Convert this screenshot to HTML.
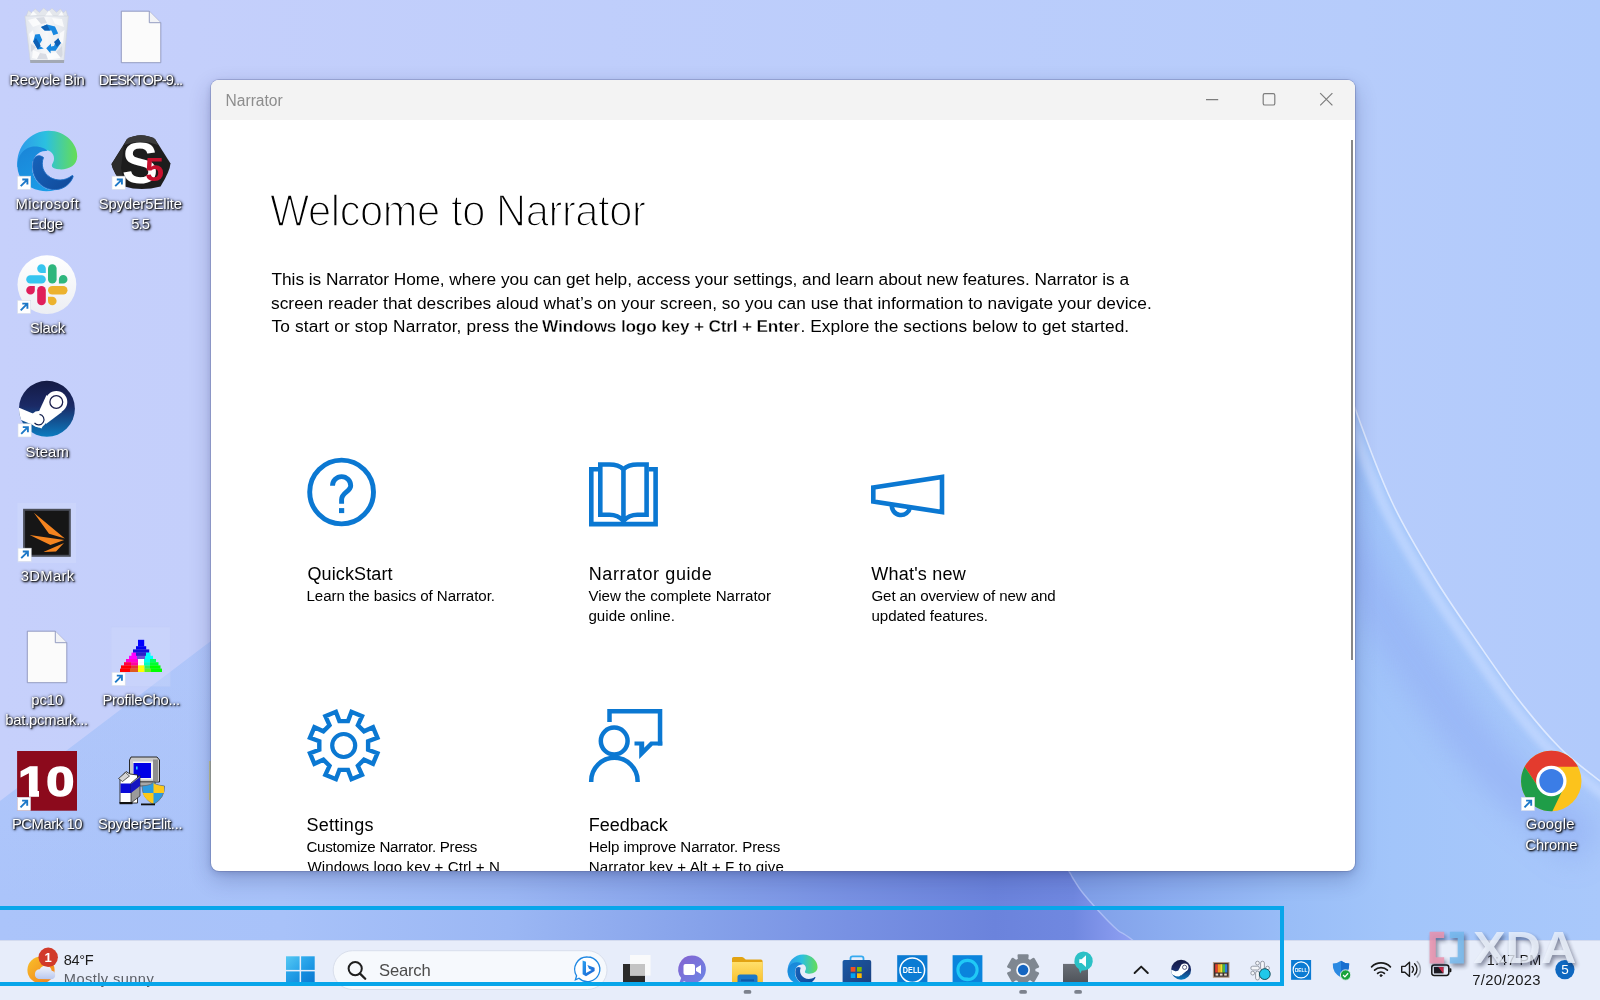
<!DOCTYPE html>
<html lang="en">
<head>
<meta charset="utf-8">
<title>Narrator</title>
<style>
*{box-sizing:border-box;margin:0;padding:0}
html,body{width:1600px;height:1000px;overflow:hidden;background:#c5d0fb;font-family:"Liberation Sans","DejaVu Sans",sans-serif;color:#000}
#desk{position:absolute;left:0;top:0;width:1600px;height:1000px;overflow:hidden;will-change:transform}
#wall{position:absolute;left:0;top:0}
.abs{position:absolute}
/* desktop icons */
.dlabel{position:absolute;width:110px;text-align:center;color:#fff;font-size:14.8px;line-height:20px;white-space:nowrap;
 text-shadow:1px 1px 1.5px rgba(0,0,0,.95),1px 1px 3px rgba(0,0,0,.75),0 0 3px rgba(0,0,0,.55)}
/* window */
#win{position:absolute;left:211px;top:80px;width:1144px;height:791px;background:#fff;border-radius:8px;overflow:hidden;
 box-shadow:0 0 0 1px rgba(90,100,150,.32),0 8px 22px rgba(20,30,90,.24),0 2px 6px rgba(20,30,90,.16)}
#tbar{position:absolute;left:0;top:0;width:100%;height:40px;background:#f3f3f3}
#tbar .t{position:absolute;left:15px;top:11.5px;font-size:15.6px;line-height:18px;color:#8d8d8d}
.h1{position:absolute;left:58px;top:104px;font-size:45px;line-height:54px;-webkit-text-stroke:1.7px #fff;white-space:nowrap;color:#000;transform:scaleX(.925);transform-origin:0 0}
.p{position:absolute;left:60px;font-size:17.3px;line-height:22px;white-space:nowrap;color:#000}
.ct{position:absolute;font-size:18px;line-height:24px;white-space:nowrap;color:#000}
.cd{position:absolute;font-size:15.1px;line-height:20px;white-space:nowrap;color:#000}
/* taskbar */
#task{position:absolute;left:0;top:940px;width:1600px;height:60px;background:#e7edfa;border-top:1px solid #d3dbef}
#focus{position:absolute;left:-6px;top:906px;width:1290px;height:80px;border:4px solid #08a6ea}
.tt{position:absolute;white-space:nowrap}
#p3b b{-webkit-text-stroke:.35px #fff}
/*FIT*/
#h1{letter-spacing:-0.444px;margin-left:1.20px}
#p1{letter-spacing:-0.036px;margin-left:0.50px}
#p2{letter-spacing:0.044px;margin-left:0.00px}
#p3a{letter-spacing:0.143px;margin-left:0.50px}
#p3b{letter-spacing:-0.200px;margin-left:0.00px}
#p3c{letter-spacing:0.070px;margin-left:1.50px}
#t1{letter-spacing:0.111px;margin-left:0.50px}
#d1a{letter-spacing:-0.071px;margin-left:-0.50px}
#t2{letter-spacing:0.615px;margin-left:-0.31px}
#d2a{letter-spacing:0.000px;margin-left:-0.61px}
#d2b{letter-spacing:0.083px;margin-left:-0.61px}
#t3{letter-spacing:0.222px;margin-left:0.31px}
#d3a{letter-spacing:-0.120px;margin-left:0.50px}
#d3b{letter-spacing:-0.062px;margin-left:0.50px}
#t4{letter-spacing:0.286px;margin-left:-0.61px}
#d4a{letter-spacing:-0.250px;margin-left:-0.61px}
#d4b{letter-spacing:0.077px;margin-left:0.41px}
#t5{letter-spacing:0.000px;margin-left:-0.31px}
#d5a{letter-spacing:-0.111px;margin-left:-0.31px}
#d5b{letter-spacing:0.103px;margin-left:-0.31px}
#tt0{letter-spacing:-0.000px;margin-left:-0.50px}
#l1{letter-spacing:-0.274px;margin-left:-0.14px}
#l2{letter-spacing:-1.040px;margin-left:-0.58px}
#l3a{letter-spacing:0.403px;margin-left:0.39px}
#l3b{letter-spacing:-0.308px;margin-left:-1.05px}
#l4a{letter-spacing:-0.059px;margin-left:-0.70px}
#l4b{letter-spacing:-0.841px;margin-left:-0.77px}
#l5{letter-spacing:-0.247px;margin-left:0.39px}
#l6{letter-spacing:0.119px;margin-left:0.23px}
#l7{letter-spacing:0.318px;margin-left:0.67px}
#l8a{letter-spacing:-0.031px;margin-left:0.19px}
#l8b{letter-spacing:-0.220px;margin-left:-0.36px}
#l9{letter-spacing:-0.311px;margin-left:0.11px}
#l10{letter-spacing:-0.426px;margin-left:-0.03px}
#l11{letter-spacing:-0.254px;margin-left:-0.80px}
#l12a{letter-spacing:0.217px;margin-left:-0.80px}
#l12b{letter-spacing:-0.087px;margin-left:0.37px}
#w1{letter-spacing:-0.365px;margin-left:-0.20px}
#w2{letter-spacing:0.430px;margin-left:-0.20px}
#se{letter-spacing:-0.188px;margin-left:-0.66px}
#tm{letter-spacing:0.118px;margin-left:-0.70px}
#dt{letter-spacing:0.309px;margin-left:-0.81px}
/*ENDFIT*/
</style>
</head>
<body>
<div id="desk">
<svg id="wall" width="1600" height="1000" viewBox="0 0 1600 1000">
<defs>
<linearGradient id="gbase" x1="0" y1="0" x2="1" y2="0"><stop offset="0" stop-color="#c6d0fb"/><stop offset=".12" stop-color="#c4cffb"/><stop offset=".85" stop-color="#b6ccfb"/><stop offset="1" stop-color="#b1cafb"/></linearGradient>
<linearGradient id="gright" gradientUnits="userSpaceOnUse" x1="1080" y1="0" x2="1600" y2="0"><stop offset="0" stop-color="#809fe8"/><stop offset=".15" stop-color="#8aabef"/><stop offset=".4" stop-color="#99bdf7"/><stop offset=".6" stop-color="#a2c5fa"/><stop offset="1" stop-color="#a9c8fb"/></linearGradient>
<linearGradient id="gleft" gradientUnits="userSpaceOnUse" x1="0" y1="0" x2="1130" y2="0"><stop offset="0" stop-color="#abc4fa"/><stop offset=".25" stop-color="#a8c2f9"/><stop offset=".45" stop-color="#9bb7f4"/><stop offset=".62" stop-color="#86a2ea"/><stop offset=".75" stop-color="#7891e3"/><stop offset=".88" stop-color="#6b83dc"/><stop offset=".95" stop-color="#7088e0"/><stop offset="1" stop-color="#8e9ff2"/></linearGradient>
<linearGradient id="gleftv" x1="0" y1="0" x2="0" y2="1"><stop offset="0" stop-color="#c3cffb" stop-opacity=".55"/><stop offset="1" stop-color="#c3cffb" stop-opacity="0"/></linearGradient>
<filter id="bl12" x="-30%" y="-30%" width="160%" height="160%"><feGaussianBlur stdDeviation="14"/></filter>
<filter id="bl3" x="-30%" y="-30%" width="160%" height="160%"><feGaussianBlur stdDeviation="3"/></filter>
<clipPath id="cright"><path d="M1330.0,330.0 C1334.3,343.5 1345.7,382.3 1356.0,411.0 C1366.3,439.7 1379.0,474.3 1392.0,502.0 C1405.0,529.7 1420.0,554.0 1434.0,577.0 C1448.0,600.0 1462.0,619.7 1476.0,640.0 C1490.0,660.3 1504.0,681.0 1518.0,699.0 C1532.0,717.0 1546.3,734.3 1560.0,748.0 C1573.7,761.7 1586.7,770.3 1600.0,781.0 C1613.3,791.7 1633.3,806.8 1640.0,812.0 L1640,1010 L1000,1010 L1000,330 Z"/></clipPath>
<clipPath id="cleft"><path d="M1050.0,845.0 C1053.1,849.3 1065.0,865.6 1068.7,871.0 C1072.5,876.4 1070.2,873.9 1072.5,877.5 C1074.8,881.1 1077.9,886.7 1082.5,892.5 C1087.1,898.3 1094.2,906.2 1100.0,912.5 C1105.8,918.8 1112.1,925.4 1117.5,930.0 C1122.9,934.6 1118.8,930.0 1132.5,940.0 C1146.2,950.0 1185.4,979.2 1200.0,990.0 C1214.6,1000.8 1216.7,1002.5 1220.0,1005.0 L0,1010 L0,400 L1050,400 Z"/></clipPath>
</defs>
<rect width="1600" height="1000" fill="url(#gbase)"/>
<g clip-path="url(#cright)">
<rect x="1000" y="300" width="600" height="700" fill="url(#gright)"/>
<path d="M1330.0,330.0 C1334.3,343.5 1345.7,382.3 1356.0,411.0 C1366.3,439.7 1379.0,474.3 1392.0,502.0 C1405.0,529.7 1420.0,554.0 1434.0,577.0 C1448.0,600.0 1462.0,619.7 1476.0,640.0 C1490.0,660.3 1504.0,681.0 1518.0,699.0 C1532.0,717.0 1546.3,734.3 1560.0,748.0 C1573.7,761.7 1586.7,770.3 1600.0,781.0 C1613.3,791.7 1633.3,806.8 1640.0,812.0" transform="translate(-52,34)" fill="none" stroke="#96b3f5" stroke-width="46" opacity=".75" filter="url(#bl12)"/>
<path d="M1330.0,330.0 C1334.3,343.5 1345.7,382.3 1356.0,411.0 C1366.3,439.7 1379.0,474.3 1392.0,502.0 C1405.0,529.7 1420.0,554.0 1434.0,577.0 C1448.0,600.0 1462.0,619.7 1476.0,640.0 C1490.0,660.3 1504.0,681.0 1518.0,699.0 C1532.0,717.0 1546.3,734.3 1560.0,748.0 C1573.7,761.7 1586.7,770.3 1600.0,781.0 C1613.3,791.7 1633.3,806.8 1640.0,812.0" transform="translate(-7,5)" fill="none" stroke="#c4d9ff" stroke-width="10" opacity=".8" filter="url(#bl3)"/>
</g>
<path d="M1330.0,330.0 C1334.3,343.5 1345.7,382.3 1356.0,411.0 C1366.3,439.7 1379.0,474.3 1392.0,502.0 C1405.0,529.7 1420.0,554.0 1434.0,577.0 C1448.0,600.0 1462.0,619.7 1476.0,640.0 C1490.0,660.3 1504.0,681.0 1518.0,699.0 C1532.0,717.0 1546.3,734.3 1560.0,748.0 C1573.7,761.7 1586.7,770.3 1600.0,781.0 C1613.3,791.7 1633.3,806.8 1640.0,812.0" fill="none" stroke="#e6efff" stroke-width="1.6" opacity=".85"/>
<g clip-path="url(#cleft)">
<path d="M0,801 L211,641 L420,480 L1300,480 L1300,1000 L0,1000 Z" fill="url(#gleft)"/>
<path d="M0,801 L211,641 L211,900 L0,900 Z" fill="url(#gleftv)" opacity=".5"/>
</g>
<path d="M1050.0,845.0 C1053.1,849.3 1065.0,865.6 1068.7,871.0 C1072.5,876.4 1070.2,873.9 1072.5,877.5 C1074.8,881.1 1077.9,886.7 1082.5,892.5 C1087.1,898.3 1094.2,906.2 1100.0,912.5 C1105.8,918.8 1112.1,925.4 1117.5,930.0 C1122.9,934.6 1118.8,930.0 1132.5,940.0 C1146.2,950.0 1185.4,979.2 1200.0,990.0 C1214.6,1000.8 1216.7,1002.5 1220.0,1005.0" fill="none" stroke="#b4c4f8" stroke-width="1.4" opacity=".8"/>
</svg>
<!--WALL-->








<!--ICONS_START--><svg class="abs" style="left:0;top:0" width="1600" height="1000" viewBox="0 0 1600 1000"><defs>
<linearGradient id="gbin" x1="0" y1="0" x2="1" y2="0"><stop offset="0" stop-color="#e3e7ee"/><stop offset=".5" stop-color="#f6f7f9"/><stop offset="1" stop-color="#dfe3ea"/></linearGradient>
<linearGradient id="gedge1" gradientUnits="userSpaceOnUse" x1="20" y1="150" x2="77" y2="150"><stop offset="0" stop-color="#2d9cea"/><stop offset=".45" stop-color="#2bc0e0"/><stop offset="1" stop-color="#66dd55"/></linearGradient>
<linearGradient id="gedge2" gradientUnits="userSpaceOnUse" x1="20" y1="150" x2="45" y2="192"><stop offset="0" stop-color="#1a86d8"/><stop offset="1" stop-color="#1b9de8"/></linearGradient>
<linearGradient id="gedge3" gradientUnits="userSpaceOnUse" x1="35" y1="158" x2="70" y2="188"><stop offset="0" stop-color="#1661b8"/><stop offset="1" stop-color="#114a9a"/></linearGradient>
<linearGradient id="gslack" x1="0" y1="0" x2="0" y2="1"><stop offset="0" stop-color="#ffffff"/><stop offset="1" stop-color="#eceef3"/></linearGradient>
<linearGradient id="gsteam" x1="0" y1="0" x2="0" y2="1"><stop offset="0" stop-color="#141a44"/><stop offset=".45" stop-color="#1b2a66"/><stop offset="1" stop-color="#0b7cc0"/></linearGradient>
</defs><g>
<path d="M26,16.5 L28.5,10.5 L32,13 L35,8.8 L39.5,12.5 L43.5,8 L48,11.5 L52,8.3 L56.5,12.3 L60.5,9 L63.5,12.8 L66,10.2 L67.8,16.5 Z" fill="#e4e7ec" stroke="#c9cdd6" stroke-width=".5"/>
<path d="M30,16 L33,11 L37,15 Z M45,16 L49,10.5 L53,16 Z M58,16 L61.5,11.5 L64,16 Z" fill="#fafbfc"/>
<path d="M24.9,16 H68.4 L64,60.5 H30.2 Z" fill="url(#gbin)" stroke="#cfd4de" stroke-width=".7"/>
<path d="M28,20 L36,18 L41,24 L33,27 Z M52,18 L62,19 L64,27 L55,24 Z M29,34 L33,30 L35,40 L31,44 Z M60,33 L64.5,30 L63,44 L59,41 Z M33,50 L40,53 L37,59 L32,58 Z M46,54 L56,52 L61,58 L48,59.5 Z" fill="#ffffff" opacity=".75"/>
<path d="M36,18 L44,17 L47,23 L41,24 Z M31,44 L36,47 L33,50 L31,52 Z M56,52 L62,46 L62.5,55 L61,58 Z M40,53 L46,54 L48,59.5 L37,59 Z" fill="#cdd2db" opacity=".7"/>
<path d="M30,60 H64.2 L64,62.9 H30.3 Z" fill="#a3a9b4"/>
<g fill="#1787e0">
<path d="M41,27 L47,24.6 L55,26.6 L58.2,33.4 L53.4,35.2 L51.4,30.6 L44.6,30.6 Z"/>
<path d="M35.2,34.6 L39.6,34 L42.2,40 L38.8,45.4 L43.8,48.6 L37.8,49.4 L33.2,41.6 Z"/>
<path d="M58.2,38.2 L60.8,43 L55.6,50.8 L50.6,50.8 L50.6,53.4 L46.2,48.2 L51,43.6 L51,46.4 L54,46 L56,41 Z"/>
</g>
<path d="M41,27 L47,24.6 L50,30.6 L44.6,30.6 Z M37.8,49.4 L33.2,41.6 L36,38 L40.6,45.6 Z M58.2,38.2 L60.8,43 L57,47 L54,42 Z" fill="#0d5fb4"/>
</g>
<path d="M121.3,11.2 H149.3 L160.8,22.7 V62.7 H121.3 Z" fill="#fbfbfb" stroke="#8a93bb" stroke-width=".9"/>
<path d="M149.3,11.2 V22.7 H160.8" fill="#f2f3f6" stroke="#8a93bb" stroke-width=".9"/>
<path d="M27.3,631.2 H55.3 L66.8,642.7 V682.7 H27.3 Z" fill="#fbfbfb" stroke="#8a93bb" stroke-width=".9"/>
<path d="M55.3,631.2 V642.7 H66.8" fill="#f2f3f6" stroke="#8a93bb" stroke-width=".9"/>
<g>
<path d="M17.4,167 C15.5,146 31,130.8 48.5,130.8 C66,130.8 77.6,144.5 77.2,156.5 C76.9,166 68,170 59,169.3 C52.5,168.8 50.5,166.5 52.8,163 C56,158 53,150.5 45.5,150 C36,149.4 28,157 27.5,168 Z" fill="url(#gedge1)"/>
<path d="M17.4,167 C17,153 27,145.5 37,146.5 C42.5,147 46,149 47.5,151 C38,150 31.5,158 32,168 C32.6,180 43,190.5 55,190.2 C50,191.5 44,191.6 40,190.6 C26,187.5 18,178 17.4,167 Z" fill="url(#gedge2)"/>
<path d="M33.5,160 C29.5,176 41,190.5 56,189.6 C64.5,189 70.5,183.5 73,177 C73.4,175.6 72.6,175.2 71.5,176 C65,181 56.5,181 50.5,177.5 C43,173 40.5,165 43.5,157.5 C39.5,154.5 35,155.5 33.5,160 Z" fill="url(#gedge3)" stroke="#1a6cc4" stroke-width=".9"/>
</g>
<g transform="translate(17.5,176.2)"><rect x="0" y="0" width="13.2" height="13.2" fill="#fff" stroke="#d8dde8" stroke-width=".6"/>
<path d="M3.2,10 L9.6,3.6 M4.8,3.3 H9.9 V8.4" fill="none" stroke="#1c78c8" stroke-width="1.9"/></g>
<g>
<path d="M127,139 Q141,131.5 155,139 L170.5,163.5 Q170,171 160.5,186.5 Q141,191.5 124.5,186.5 Q112.5,172 111.5,164 Z" fill="#1d1d1d"/>
<path d="M127,139 Q141,131.5 155,139 L158,145 Q141,138.5 124,145 Z" fill="#3a3a3a"/>
<path d="M111.5,164 L124,145 L121,168 L124.5,186.5 Q113,172 111.5,164 Z" fill="#2b2b2b"/>
<text x="122" y="183" font-family="'Liberation Sans',sans-serif" font-weight="bold" font-size="57" fill="#fff" textLength="36" lengthAdjust="spacingAndGlyphs">S</text>
<text x="145" y="181" font-family="'Liberation Sans',sans-serif" font-weight="bold" font-size="33" fill="#c8102e" textLength="19" lengthAdjust="spacingAndGlyphs">5</text>
</g>
<g transform="translate(112,176.2)"><rect x="0" y="0" width="13.2" height="13.2" fill="#fff" stroke="#d8dde8" stroke-width=".6"/>
<path d="M3.2,10 L9.6,3.6 M4.8,3.3 H9.9 V8.4" fill="none" stroke="#1c78c8" stroke-width="1.9"/></g>
<g><circle cx="46.9" cy="284.6" r="29.4" fill="url(#gslack)"/><rect x="26.2" y="275.2" width="19.6" height="8.4" rx="4.2" fill="#36c5f0"/><path d="M41.5,264.3 H41.5 A4.299999999999997,4.299999999999997 0 0 1 45.8,268.6 V272.9 A0,0 0 0 1 45.8,272.9 H41.5 A4.299999999999997,4.299999999999997 0 0 1 37.2,268.59999999999997 V268.6 A4.299999999999997,4.299999999999997 0 0 1 41.5,264.3 Z" fill="#36c5f0"/><rect x="48" y="264.3" width="8.6" height="19.3" rx="4.3" fill="#2eb67d"/><path d="M63.2,275.1 H63.2 A4.300000000000001,4.300000000000001 0 0 1 67.5,279.40000000000003 V279.3 A4.300000000000001,4.300000000000001 0 0 1 63.2,283.6 H58.9 A0,0 0 0 1 58.9,283.6 V279.40000000000003 A4.300000000000001,4.300000000000001 0 0 1 63.2,275.1 Z" fill="#2eb67d"/><rect x="37.2" y="286" width="8.6" height="19.3" rx="4.3" fill="#e01e5a"/><path d="M30.5,286 H34.8 A0,0 0 0 1 34.8,286 V290.3 A4.299999999999999,4.299999999999999 0 0 1 30.5,294.6 H30.5 A4.299999999999999,4.299999999999999 0 0 1 26.2,290.3 V290.3 A4.299999999999999,4.299999999999999 0 0 1 30.5,286 Z" fill="#e01e5a"/><rect x="48" y="286" width="19.5" height="8.5" rx="4.2" fill="#ecb22e"/><path d="M48,296.8 H52.3 A4.300000000000001,4.300000000000001 0 0 1 56.6,301.1 V301.0 A4.300000000000001,4.300000000000001 0 0 1 52.3,305.3 H52.3 A4.300000000000001,4.300000000000001 0 0 1 48,301.0 V296.8 A0,0 0 0 1 48,296.8 Z" fill="#ecb22e"/></g>
<g transform="translate(17.5,300.3)"><rect x="0" y="0" width="13.2" height="13.2" fill="#fff" stroke="#d8dde8" stroke-width=".6"/>
<path d="M3.2,10 L9.6,3.6 M4.8,3.3 H9.9 V8.4" fill="none" stroke="#1c78c8" stroke-width="1.9"/></g>
<g>
<circle cx="46.9" cy="408.8" r="28" fill="url(#gsteam)"/>
<clipPath id="csteam"><circle cx="46.9" cy="408.8" r="28"/></clipPath>
<g clip-path="url(#csteam)">
<path d="M16,406.5 L34,414 L46.5,419 L41.5,428.5 L16,418 Z" fill="#fff"/>
<path d="M46.5,395 L38,413.5 L46,424 L62,412 Z" fill="#fff"/>
<circle cx="56.3" cy="402" r="11" fill="#fff"/>
<circle cx="38.6" cy="419.3" r="8.2" fill="#fff"/>
</g>
<circle cx="56.3" cy="402" r="6.4" fill="#fff" stroke="#1b1f4d" stroke-width="1.3"/>
<path d="M39.5,414.3 A5.3,5.3 0 1 1 34.5,422.8" fill="none" stroke="#14214f" stroke-width="1.2"/>
</g>
<g transform="translate(18,423.8)"><rect x="0" y="0" width="13.2" height="13.2" fill="#fff" stroke="#d8dde8" stroke-width=".6"/>
<path d="M3.2,10 L9.6,3.6 M4.8,3.3 H9.9 V8.4" fill="none" stroke="#1c78c8" stroke-width="1.9"/></g>
<g>
<rect x="17.5" y="503" width="58.5" height="60" fill="#d6defc" opacity=".38"/>
<rect x="24.1" y="509.8" width="45.7" height="46" fill="#161616" stroke="#4a4e59" stroke-width="2"/>
<path d="M33.9,512.7 L64.9,538.6 L49,533.7 Z M29.7,535.1 L64.2,540 L50.4,544.9 Z M43.4,551.9 L64,543.1 L56,551.6 Z" fill="#f5841f"/>
</g>
<g transform="translate(18,548.2)"><rect x="0" y="0" width="13.2" height="13.2" fill="#fff" stroke="#d8dde8" stroke-width=".6"/>
<path d="M3.2,10 L9.6,3.6 M4.8,3.3 H9.9 V8.4" fill="none" stroke="#1c78c8" stroke-width="1.9"/></g>
<g><rect x="111.2" y="627" width="59" height="59.5" fill="#d3dcfc" opacity=".32" stroke="#c2ccf2" stroke-width=".6"/><rect x="138" y="639.8" width="6.2" height="3.4" fill="#0000ff"/><rect x="138" y="643" width="6.2" height="3.4" fill="#0000ff"/><rect x="136" y="646.2" width="10.2" height="3.4" fill="#0000f0"/><rect x="133" y="649.4" width="16.2" height="3.4" fill="#1010d8"/><rect x="131.5" y="652.6" width="4.5" height="3.4" fill="#ff00ff"/><rect x="136" y="652.6" width="10.0" height="3.4" fill="#2a20c8"/><rect x="146" y="652.6" width="4.5" height="3.4" fill="#00ffff"/><rect x="129" y="655.8" width="8.0" height="3.4" fill="#ff00ff"/><rect x="137" y="655.8" width="8.0" height="3.4" fill="#6a50d8"/><rect x="145" y="655.8" width="8.0" height="3.4" fill="#00ffff"/><rect x="126" y="659" width="12.0" height="3.4" fill="#ff00d0"/><rect x="138" y="659" width="6.0" height="3.4" fill="#ffffff"/><rect x="144" y="659" width="6.0" height="3.4" fill="#00ffee"/><rect x="150" y="659" width="6.0" height="3.4" fill="#00ff60"/><rect x="124" y="662.2" width="7.0" height="3.4" fill="#ff0040"/><rect x="131" y="662.2" width="7.0" height="3.4" fill="#ff00a0"/><rect x="138" y="662.2" width="6.0" height="3.4" fill="#ffffff"/><rect x="144" y="662.2" width="6.0" height="3.4" fill="#00ffc0"/><rect x="150" y="662.2" width="8.5" height="3.4" fill="#00ff30"/><rect x="121" y="665.4" width="10.0" height="3.4" fill="#ff0000"/><rect x="131" y="665.4" width="7.0" height="3.4" fill="#e83030"/><rect x="138" y="665.4" width="6.5" height="3.4" fill="#ffff00"/><rect x="144.5" y="665.4" width="5.5" height="3.4" fill="#30f060"/><rect x="150" y="665.4" width="10.5" height="3.4" fill="#00ff00"/><rect x="120" y="668.6" width="10.0" height="3.4" fill="#ff0000"/><rect x="130" y="668.6" width="8.0" height="3.4" fill="#e05820"/><rect x="138" y="668.6" width="6.5" height="3.4" fill="#ffff00"/><rect x="144.5" y="668.6" width="6.5" height="3.4" fill="#60f020"/><rect x="151" y="668.6" width="11.0" height="3.4" fill="#00ff00"/></g>
<g transform="translate(112,672.3)"><rect x="0" y="0" width="13.2" height="13.2" fill="#fff" stroke="#d8dde8" stroke-width=".6"/>
<path d="M3.2,10 L9.6,3.6 M4.8,3.3 H9.9 V8.4" fill="none" stroke="#1c78c8" stroke-width="1.9"/></g>
<g>
<rect x="17.1" y="751" width="59.9" height="59.7" fill="#8c0a1c"/>

</g>
<g transform="translate(17.3,797.3)"><rect x="0" y="0" width="13.2" height="13.2" fill="#fff" stroke="#d8dde8" stroke-width=".6"/>
<path d="M3.2,10 L9.6,3.6 M4.8,3.3 H9.9 V8.4" fill="none" stroke="#1c78c8" stroke-width="1.9"/></g>
<g>
<path d="M131,757 H157 L159.5,760 V782 H129.5 V760 Z" fill="#c9c9c9" stroke="#2a2a2a" stroke-width="1"/>
<rect x="133" y="761.5" width="20" height="18" fill="#f4f4f4"/>
<rect x="133.5" y="763" width="17.5" height="15" fill="#0000e6"/>
<rect x="136" y="766.5" width="1.6" height="3" fill="#2fd0ff"/>
<rect x="153" y="759.5" width="5" height="22" fill="#8e8e8e"/>
<rect x="134" y="782" width="21" height="4" fill="#a8a8a8" stroke="#222" stroke-width=".6"/>
<path d="M120,778 L126,771.5 L130,774 L137.5,775 V803 H120 Z" fill="#fff" stroke="#222" stroke-width=".9"/>
<path d="M118.5,778.5 L125.5,772.5 L129.5,776 L122.5,781.5 Z" fill="#d5d5d5" stroke="#222" stroke-width=".7"/>
<rect x="120.5" y="783.5" width="10.5" height="9.5" fill="#0a0ad8"/>
<path d="M131,783 L140,775.5 V796 L131,803 Z" fill="#9a9a9a" stroke="#222" stroke-width=".7"/>
<path d="M131,784 L140,777 V786 L131,793 Z" fill="#1414c0"/>
<rect x="119.5" y="802" width="13" height="2.2" fill="#111"/>
<path d="M142,786 Q153,785 153.5,781.5 Q154,785 164.5,786 Q165,798 153.5,804.5 Q142,798 142,786 Z" fill="#2c9be0" stroke="#6d6d6d" stroke-width=".8"/>
<path d="M153.5,782.5 Q154,785 164,786.3 L164,793 H153.5 Z" fill="#fdc81a"/>
<path d="M142.6,793 H153.5 V804 Q144.5,799.5 142.6,793 Z" fill="#fdc81a"/>
<rect x="141" y="803.5" width="14" height="1.8" fill="#111"/>
</g>
<g id="chrome">
<circle cx="1551.3" cy="781" r="30.2" fill="#fcc31c"/>
<path d="M1524.6,766.8 A30.2,30.2 0 0 1 1578.0,766.8 L1551.3,766.8 A14.2,14.2 0 0 0 1539.0,788.1 Z" fill="#e33b2e"/>
<path d="M1524.6,766.8 A30.2,30.2 0 0 0 1552.4,811.2 L1563.6,788.1 A14.2,14.2 0 0 1 1539.0,788.1 Z" fill="#1f9d48"/>
<circle cx="1551.3" cy="781" r="15.2" fill="#fff"/>
<circle cx="1551.3" cy="781" r="12" fill="#3b7de6"/>
</g>
<g transform="translate(1521.3,797.3)"><rect x="0" y="0" width="13.2" height="13.2" fill="#fff" stroke="#d8dde8" stroke-width=".6"/>
<path d="M3.2,10 L9.6,3.6 M4.8,3.3 H9.9 V8.4" fill="none" stroke="#1c78c8" stroke-width="1.9"/></g></svg>
<div class="dlabel" id="l1" style="left:-8px;top:70.2px">Recycle Bin</div>
<div class="dlabel" id="l2" style="left:86px;top:70.2px">DESKTOP-9...</div>
<div class="dlabel" id="l3a" style="left:-8px;top:194.3px">Microsoft</div>
<div class="dlabel" id="l3b" style="left:-8px;top:214.3px">Edge</div>
<div class="dlabel" id="l4a" style="left:86px;top:194.3px">Spyder5Elite</div>
<div class="dlabel" id="l4b" style="left:86px;top:214.3px">5.5</div>
<div class="dlabel" id="l5" style="left:-8px;top:318.3px">Slack</div>
<div class="dlabel" id="l6" style="left:-8px;top:442.3px">Steam</div>
<div class="dlabel" id="l7" style="left:-8px;top:566.3px">3DMark</div>
<div class="dlabel" id="l8a" style="left:-8px;top:690.3px">pc10</div>
<div class="dlabel" id="l8b" style="left:-8px;top:710.3px">bat.pcmark...</div>
<div class="dlabel" id="l9" style="left:86px;top:690.3px">ProfileCho...</div>
<div class="dlabel" id="l10" style="left:-8px;top:814.3px">PCMark 10</div>
<div class="dlabel" id="l11" style="left:86px;top:814.3px">Spyder5Elit...</div>
<div class="dlabel" id="l12a" style="left:1496px;top:814.3px">Google</div>
<div class="dlabel" id="l12b" style="left:1496px;top:834.5px">Chrome</div>
<div class="abs" style="left:17.6px;top:759.8px;font-weight:bold;font-size:41.8px;line-height:44px;color:#fff;-webkit-text-stroke:1.4px #fff;transform:scaleX(1.21);transform-origin:0 0;white-space:nowrap">10</div>
<div class="abs" style="left:19.6px;top:789.6px;width:9.2px;height:7.6px;background:#8c0a1c"></div><div class="abs" style="left:38.6px;top:789.6px;width:8.4px;height:7.6px;background:#8c0a1c"></div><!--ICONS_END-->
<!--ICONS-->
<div id="sliver" class="abs" style="left:208.8px;top:761px;width:2.4px;height:39px;background:#d2c552;opacity:.6"></div>
<div id="win">
<div id="tbar"><div class="t" id="tt0">Narrator</div>
<svg class="abs" style="left:980px;top:0" width="164" height="40" viewBox="1191 80 164 40" fill="none" stroke="#7d7d7d" stroke-width="1.2">
<path d="M1206,99.6 H1218.2"/><rect x="1263.2" y="93.6" width="11.6" height="11.4" rx="1.6"/><path d="M1320.2,93.2 L1332.4,105.4 M1332.4,93.2 L1320.2,105.4"/></svg>
</div>
<div class="abs" style="left:1139.5px;top:60px;width:2.4px;height:520px;background:#878787"></div>
<div class="h1" id="h1">Welcome to Narrator</div>
<div class="p" id="p1" style="top:188.4px">This is Narrator Home, where you can get help, access your settings, and learn about new features. Narrator is a</div>
<div class="p" id="p2" style="top:211.6px">screen reader that describes aloud what’s on your screen, so you can use that information to navigate your device.</div>
<div class="p" id="p3a" style="top:235px">To start or stop Narrator, press the</div>
<div class="p" id="p3b" style="top:235px;left:331px"><b>Windows logo key + Ctrl + Enter</b></div>
<div class="p" id="p3c" style="top:235px;left:588px">. Explore the sections below to get started.</div>
<svg class="abs" style="left:0;top:0" width="1144" height="791" viewBox="211 80 1144 791" fill="none" stroke="#0b78d2" stroke-width="4.6">
<circle cx="341.6" cy="492" r="31.9" stroke-width="4.9"/>
<path d="M332.5,485.7 A9.1,9.1 0 0 1 350.7,485.7 C350.7,491.5 341.6,492.5 341.6,499.5 V503.7" stroke-width="4.9"/>
<rect x="339" y="508.1" width="5.2" height="5" fill="#0b78d2" stroke="none"/>
<path d="M598,469.2 H591.3 V524.1 H655.6 V469.2 H648.8"/>
<path d="M623.45,521 C620,517.2 616,514.8 609.5,514.8 H600.3 V464.5 H609.5 C616,464.5 620,466 623.45,469.2 C626.9,466 630.9,464.5 637.4,464.5 H646.6 V514.8 H637.4 C630.9,514.8 626.9,517.2 623.45,521 Z M623.45,469.2 V521" stroke-linejoin="miter"/>
<path d="M873.3,487.4 L942,476.9 V512.1 L873.3,501.6 Z"/>
<path d="M892,504.6 A9.1,9.1 0 0 0 910,507.3"/>
<path d="M368.1,741.2 L368.1,749.8 L377.4,753.3 L373.0,763.8 L364.0,759.7 L357.9,765.8 L362.0,774.8 L351.5,779.2 L348.0,769.9 L339.4,769.9 L335.9,779.2 L325.4,774.8 L329.5,765.8 L323.4,759.7 L314.4,763.8 L310.0,753.3 L319.3,749.8 L319.3,741.2 L310.0,737.7 L314.4,727.2 L323.4,731.3 L329.5,725.2 L325.4,716.2 L335.9,711.8 L339.4,721.1 L348.0,721.1 L351.5,711.8 L362.0,716.2 L357.9,725.2 L364.0,731.3 L373.0,727.2 L377.4,737.7 Z" stroke-width="4.4"/>
<circle cx="343.7" cy="745.5" r="11.5" stroke-width="4.2"/>
<path d="M609.5,722 V711.25 H660.05 V745.5" stroke-width="4.5"/>
<path d="M634.5,741.4 H644.2 V747.7 L650.5,741.4 H662.3 V745.5 H652.7 L639.2,759 V745.5 H634.5 Z" fill="#0b78d2" stroke="none"/>
<circle cx="614.2" cy="741" r="13.4" stroke-width="4.5"/>
<path d="M591.2,782 V781 A23.2,23.2 0 0 1 637.6,781 V782" stroke-width="4.5"/>
</svg>
<div class="ct" id="t1" style="left:96px;top:482.2px">QuickStart</div>
<div class="cd" id="d1a" style="left:96px;top:506.4px">Learn the basics of Narrator.</div>
<div class="ct" id="t2" style="left:378px;top:482.2px">Narrator guide</div>
<div class="cd" id="d2a" style="left:378px;top:506.4px">View the complete Narrator</div>
<div class="cd" id="d2b" style="left:378px;top:526.4px">guide online.</div>
<div class="ct" id="t3" style="left:660px;top:482.2px">What's new</div>
<div class="cd" id="d3a" style="left:660px;top:506.4px">Get an overview of new and</div>
<div class="cd" id="d3b" style="left:660px;top:526.4px">updated features.</div>
<div class="ct" id="t4" style="left:96px;top:733.1px">Settings</div>
<div class="cd" id="d4a" style="left:96px;top:757.1px">Customize Narrator. Press</div>
<div class="cd" id="d4b" style="left:96px;top:777.1px">Windows logo key + Ctrl + N</div>
<div class="ct" id="t5" style="left:378px;top:733.1px">Feedback</div>
<div class="cd" id="d5a" style="left:378px;top:757.1px">Help improve Narrator. Press</div>
<div class="cd" id="d5b" style="left:378px;top:777.1px">Narrator key + Alt + F to give</div>
</div>
<!--WINDOW-->


<!--TASK_START--><div id="task"></div>
<svg class="abs" style="left:0;top:0" width="1600" height="1000" viewBox="0 0 1600 1000"><defs>
<linearGradient id="gsun" x1="0" y1="0" x2="1" y2="1"><stop offset="0" stop-color="#f8c12a"/><stop offset="1" stop-color="#f27d1c"/></linearGradient>
<linearGradient id="gcloud" x1="0" y1="0" x2="0" y2="1"><stop offset="0" stop-color="#f2f5fc"/><stop offset="1" stop-color="#b9c7ee"/></linearGradient>
<linearGradient id="gw1" x1="0" y1="0" x2="1" y2="1"><stop offset="0" stop-color="#55c8f3"/><stop offset="1" stop-color="#2aa5ea"/></linearGradient>
<linearGradient id="gw2" x1="0" y1="0" x2="1" y2="1"><stop offset="0" stop-color="#33aeee"/><stop offset="1" stop-color="#1590e0"/></linearGradient>
<linearGradient id="gw3" x1="0" y1="0" x2="1" y2="1"><stop offset="0" stop-color="#2ba6ea"/><stop offset="1" stop-color="#138bdc"/></linearGradient>
<linearGradient id="gw4" x1="0" y1="0" x2="1" y2="1"><stop offset="0" stop-color="#168fe0"/><stop offset="1" stop-color="#0b78d0"/></linearGradient>
<linearGradient id="gbing" x1="0" y1="0" x2="1" y2="1"><stop offset="0" stop-color="#2aa0f0"/><stop offset="1" stop-color="#1b5fd0"/></linearGradient>
<linearGradient id="gchat" x1="0" y1="0" x2="1" y2="1"><stop offset="0" stop-color="#8562d0"/><stop offset="1" stop-color="#6a86e6"/></linearGradient>
<linearGradient id="gfold" x1="0" y1="0" x2="0" y2="1"><stop offset="0" stop-color="#ffdf6b"/><stop offset="1" stop-color="#f9be25"/></linearGradient>
<linearGradient id="gstore" x1="0" y1="0" x2="1" y2="1"><stop offset="0" stop-color="#1a5aa6"/><stop offset="1" stop-color="#1c3f7e"/></linearGradient>
<linearGradient id="gnar" x1="0" y1="0" x2="0" y2="1"><stop offset="0" stop-color="#6a6f77"/><stop offset="1" stop-color="#4b4f56"/></linearGradient>
<linearGradient id="gsteam2" x1="0" y1="0" x2="0" y2="1"><stop offset="0" stop-color="#141a44"/><stop offset=".45" stop-color="#1b2a66"/><stop offset="1" stop-color="#0b7cc0"/></linearGradient>
<filter id="fxda" x="-10%" y="-20%" width="120%" height="150%"><feGaussianBlur stdDeviation="2.2"/></filter>
</defs><g>
<circle cx="41" cy="970" r="13.6" fill="url(#gsun)"/>
<path d="M38.5,979 a5,5 0 0 1 1.2,-9.8 a6.4,6.4 0 0 1 12,1.6 a4.3,4.3 0 0 1 -0.4,8.5 Z" fill="url(#gcloud)"/>
<circle cx="48.2" cy="957.3" r="9.7" fill="#d13a2a"/>
</g>
<g>
<rect x="286" y="956.3" width="13.6" height="13.6" fill="url(#gw1)"/>
<rect x="301.1" y="956.3" width="13.6" height="13.6" fill="url(#gw2)"/>
<rect x="286" y="971.4" width="13.6" height="13.6" fill="url(#gw3)"/>
<rect x="301.1" y="971.4" width="13.6" height="13.6" fill="url(#gw4)"/>
</g>
<g>
<rect x="333.2" y="950.7" width="273.8" height="38.8" rx="19.4" fill="#f6f9fd" stroke="#d9dfec" stroke-width="1"/>
<circle cx="355.2" cy="968.6" r="6.6" fill="none" stroke="#1f1f1f" stroke-width="2"/>
<path d="M360,973.6 L365.2,978.8" stroke="#1f1f1f" stroke-width="2.3" stroke-linecap="round"/>
<path d="M587.5,957 a12.3,12.3 0 1 1 -8.5,21.2 l-3.6,1.6 l1.2,-4 a12.3,12.3 0 0 1 10.9,-18.8 Z" fill="#fff" stroke="#1c86e2" stroke-width="1.3"/>
<path d="M582.6,960.6 l3.4,1.2 v11.2 l5.6,-3.1 l-2.6,-1.2 l-1.6,-3.7 l7.2,2.7 v3.4 l-8.6,5.2 l-3.4,-2 Z" fill="url(#gbing)"/>
</g>
<g>
<rect x="623" y="964" width="22" height="21" fill="#2b2b2b"/>
<rect x="630" y="955" width="20.6" height="20.6" fill="#fbfbfb" opacity=".92"/>
<rect x="630" y="964" width="15" height="11.6" fill="#c4c4c4"/>
</g>
<g>
<path d="M691.9,955.4 a14,14 0 1 1 -7.5,25.8 l-5.2,2 l2,-5.2 a14,14 0 0 1 10.7,-22.6 Z" fill="url(#gchat)"/>
<rect x="683.5" y="964" width="11.5" height="11" rx="2" fill="#fff"/>
<path d="M696,968 l5,-3 v9 l-5,-3 Z" fill="#fff"/>
</g>
<g>
<path d="M732,958.6 q0,-1.7 1.7,-1.7 h8.2 q1,0 1.8,.8 l2,1.8 h15.2 q1.7,0 1.7,1.7 v24 h-30.6 Z" fill="#e2a312"/>
<path d="M732,962 h30.6 v23 h-30.6 Z" fill="url(#gfold)"/>
<path d="M737.5,977 q0,-2.6 2.6,-2.6 h14.8 q2.6,0 2.6,2.6 v8.5 h-20 Z" fill="#1b78c8"/>
<rect x="741" y="979.3" width="13" height="2" fill="#0e5aa8"/>
</g>
<g transform="translate(802.6,969.6) scale(.5) translate(-47.3,-161)">
<path d="M17.4,167 C15.5,146 31,130.8 48.5,130.8 C66,130.8 77.6,144.5 77.2,156.5 C76.9,166 68,170 59,169.3 C52.5,168.8 50.5,166.5 52.8,163 C56,158 53,150.5 45.5,150 C36,149.4 28,157 27.5,168 Z" fill="url(#gedge1)"/>
<path d="M17.4,167 C17,153 27,145.5 37,146.5 C42.5,147 46,149 47.5,151 C38,150 31.5,158 32,168 C32.6,180 43,190.5 55,190.2 C50,191.5 44,191.6 40,190.6 C26,187.5 18,178 17.4,167 Z" fill="url(#gedge2)"/>
<path d="M33.5,160 C29.5,176 41,190.5 56,189.6 C64.5,189 70.5,183.5 73,177 C73.4,175.6 72.6,175.2 71.5,176 C65,181 56.5,181 50.5,177.5 C43,173 40.5,165 43.5,157.5 C39.5,154.5 35,155.5 33.5,160 Z" fill="url(#gedge3)"/>
</g>
<g>
<path d="M850.5,961 v-2.5 q0,-2.2 2.2,-2.2 h8.6 q2.2,0 2.2,2.2 v2.5" fill="none" stroke="#35aaf0" stroke-width="1.8"/>
<path d="M842.6,961.8 q0,-1.8 1.8,-1.8 h25 q1.8,0 1.8,1.8 v23.5 h-28.6 Z" fill="url(#gstore)"/>
<rect x="850.7" y="967" width="4.7" height="4.7" fill="#f25022"/><rect x="857" y="967" width="4.7" height="4.7" fill="#7fba00"/>
<rect x="850.7" y="973.3" width="4.7" height="4.7" fill="#00a4ef"/><rect x="857" y="973.3" width="4.7" height="4.7" fill="#ffb900"/>
</g>
<g>
<rect x="897.2" y="955.2" width="30.2" height="30.2" fill="#0b7bd3"/>
<circle cx="912.3" cy="970.2" r="12.3" fill="none" stroke="#fff" stroke-width="1.5"/>
<text x="912.3" y="973.3" text-anchor="middle" font-family="'Liberation Sans',sans-serif" font-weight="bold" font-size="8.6" fill="#fff" textLength="19" lengthAdjust="spacingAndGlyphs">DELL</text>
</g>
<g>
<rect x="952.6" y="955.2" width="29.8" height="30.2" fill="#0b84dc"/>
<circle cx="967.5" cy="970" r="9.6" fill="none" stroke="#20c9f6" stroke-width="3.1"/>
<path d="M961,977.5 q4.5,3.5 9,3.4 q-1.5,-1.4 -1.7,-3.4 Z" fill="#20c9f6"/>
</g>
<g>
<path d="M1018.7,955.5 L1027.5,955.5 L1027.1,959.5 L1030.1,961.3 L1033.5,958.9 L1037.9,966.6 L1034.2,968.2 L1034.2,971.8 L1037.9,973.4 L1033.5,981.1 L1030.1,978.7 L1027.1,980.5 L1027.5,984.5 L1018.7,984.5 L1019.1,980.5 L1016.1,978.7 L1012.7,981.1 L1008.3,973.4 L1012.0,971.8 L1012.0,968.2 L1008.3,966.6 L1012.7,958.9 L1016.1,961.3 L1019.1,959.5 Z" fill="#7f8791" stroke="#7f8791" stroke-width="2.4" stroke-linejoin="round"/>
<circle cx="1023.1" cy="970" r="6.9" fill="#f3f6fb"/>
<circle cx="1023.1" cy="970" r="5.2" fill="#1565c0"/>
</g>
<g>
<rect x="1063" y="963.9" width="25" height="21.5" fill="url(#gnar)"/>
<path d="M1083.3,951.4 a9.6,9.6 0 1 1 -1.5,19.1 l-1.6,3 l-1.4,-4.5 a9.6,9.6 0 0 1 4.5,-17.6 Z" fill="#2cc1c6"/>
<path d="M1079.3,959.3 h2.3 l4.4,-4 v11.6 l-4.4,-4 h-2.3 Z" fill="#fff"/>
</g>
<rect x="743.6" y="990" width="7.8" height="3.8" rx="1.9" fill="#7c828d"/>
<rect x="1019.2" y="990" width="7.8" height="3.8" rx="1.9" fill="#7c828d"/>
<rect x="1074.1999999999998" y="990" width="7.8" height="3.8" rx="1.9" fill="#7c828d"/>
<path d="M1134.6,973 L1141.2,966.6 L1147.8,973" fill="none" stroke="#1b1b1b" stroke-width="1.9" stroke-linecap="round" stroke-linejoin="round"/>
<g>
<circle cx="1181.1" cy="969.8" r="10" fill="url(#gsteam2)"/>
<clipPath id="cst2"><circle cx="1181.1" cy="969.8" r="10"/></clipPath>
<g clip-path="url(#cst2)"><path d="M1170,969 L1178.5,972.6 L1176.5,976.5 L1170,973.6 Z M1181.5,964.5 L1177.5,972 L1181,975.5 L1187,970.5 Z" fill="#fff"/></g>
<circle cx="1184.6" cy="967.3" r="3.9" fill="#fff"/><circle cx="1184.6" cy="967.3" r="2.1" fill="#fff" stroke="#1b2252" stroke-width=".7"/>
<circle cx="1178.1" cy="973.6" r="2.9" fill="#fff"/>
</g>
<g>
<rect x="1213.4" y="962.6" width="15.6" height="14.6" fill="#3b2f2a" stroke="#b59a86" stroke-width="1"/>
<rect x="1215.2" y="964.2" width="2.5" height="8.3" fill="#e53a2f"/><rect x="1217.7" y="964.2" width="2.5" height="8.3" fill="#f59b23"/>
<rect x="1220.2" y="964.2" width="2.4" height="8.3" fill="#f4e02c"/><rect x="1222.6" y="964.2" width="2.4" height="8.3" fill="#46b648"/>
<rect x="1225" y="964.2" width="2.3" height="8.3" fill="#2a7de1"/>
<rect x="1215.6" y="973.6" width="2.6" height="2" fill="#e9dccf"/><rect x="1219.9" y="973.6" width="2.6" height="2" fill="#e9dccf"/><rect x="1224.2" y="973.6" width="2.6" height="2" fill="#e9dccf"/>
</g>
<g fill="#f4f6fa" stroke="#8d939e" stroke-width=".9">
<rect x="1250.8" y="966.2" width="8.6" height="3.8" rx="1.9"/><rect x="1255.6" y="961.2" width="3.8" height="3.8" rx="1.9"/>
<rect x="1260.6" y="961.2" width="3.8" height="8.8" rx="1.9"/><rect x="1265.6" y="966.2" width="3.8" height="3.8" rx="1.9"/>
<rect x="1255.6" y="971.2" width="3.8" height="8.8" rx="1.9"/><rect x="1250.8" y="971.2" width="3.8" height="3.8" rx="1.9"/>
<rect x="1260.6" y="971.2" width="8.8" height="3.8" rx="1.9"/>
</g>
<circle cx="1264.8" cy="974.1" r="5.4" fill="#1fc8ea" stroke="#0f4f5c" stroke-width="1"/>
<g>
<rect x="1291.1" y="960" width="20" height="19.8" fill="#0b7bd3"/>
<circle cx="1301.1" cy="969.9" r="8" fill="none" stroke="#fff" stroke-width="1.1"/>
<text x="1301.1" y="972" text-anchor="middle" font-family="'Liberation Sans',sans-serif" font-weight="bold" font-size="5.6" fill="#fff" textLength="12.4" lengthAdjust="spacingAndGlyphs">DELL</text>
</g>
<g>
<path d="M1341,960.8 q3.4,2.6 8.2,2.8 q.6,9.4 -8.2,13.8 q-8.8,-4.4 -8.2,-13.8 q4.8,-.2 8.2,-2.8 Z" fill="#2b8ae2"/>
<path d="M1341,960.8 q3.4,2.6 8.2,2.8 q.6,9.4 -8.2,13.8 Z" fill="#176fd0"/>
<circle cx="1345.6" cy="975" r="5.2" fill="#17a33b" stroke="#e9eef9" stroke-width=".9"/>
<path d="M1343.1,975 l1.8,1.9 l3.2,-3.6" fill="none" stroke="#fff" stroke-width="1.3"/>
</g>
<g fill="none" stroke="#1b1b1b" stroke-width="1.7" stroke-linecap="round">
<path d="M1371.6,966.8 a13.4,13.4 0 0 1 18.8,0"/><path d="M1374.6,970.2 a9.2,9.2 0 0 1 12.8,0"/><path d="M1377.6,973.4 a4.9,4.9 0 0 1 6.8,0"/>
<circle cx="1381" cy="975.6" r="1" fill="#1b1b1b" stroke-width=".8"/>
</g>
<g fill="none" stroke="#1b1b1b" stroke-width="1.4" stroke-linejoin="round" stroke-linecap="round">
<path d="M1401.7,966.4 h3.2 l4.6,-4.2 v14.2 l-4.6,-4.2 h-3.2 Z"/>
<path d="M1412.2,966.4 a4,4 0 0 1 0,5.8"/><path d="M1414.6,963.8 a7.6,7.6 0 0 1 0,11"/><path d="M1417.2,961.6 a10.8,10.8 0 0 1 0,15.4" stroke="#9aa0aa"/>
</g>
<g>
<rect x="1431.8" y="964.9" width="17" height="10.6" rx="2.4" fill="none" stroke="#161616" stroke-width="1.5"/>
<path d="M1449.4,968.2 h1.1 q.9,0 .9,.9 v2.2 q0,.9 -.9,.9 h-1.1 Z" fill="#161616"/>
<rect x="1433.9" y="967" width="9.5" height="6.4" fill="#1d1b22"/>
<path d="M1438.2,967 h5.2 v6.4 Z" fill="#d22847"/>
</g>
<circle cx="1564.9" cy="969.6" r="9.6" fill="#0f68c0"/></svg>
<div class="tt" id="w1" style="left:64px;top:949.9px;font-size:14.6px;line-height:20px;color:#1b1b1b;">84°F</div>
<div class="tt" id="w2" style="left:64px;top:969.4px;font-size:14.6px;line-height:20px;color:#5c6068;">Mostly sunny</div>
<div class="tt" id="wb" style="left:44.6px;top:949.7px;font-size:13px;line-height:16px;color:#fff;font-weight:bold">1</div>
<div class="tt" id="se" style="left:379.7px;top:960.5px;font-size:16.6px;line-height:20px;color:#4b4b4b;">Search</div>
<div class="tt" id="tm" style="left:1487.5px;top:949.5px;font-size:14.4px;line-height:20px;color:#1b1b1b;">1:47 PM</div>
<div class="tt" id="dt" style="left:1473px;top:969.6px;font-size:14.8px;line-height:20px;color:#1b1b1b;">7/20/2023</div>
<div class="tt" id="nb" style="left:1561.2px;top:961.9px;font-size:13.5px;line-height:16px;color:#fff;">5</div>
<svg class="abs" style="left:0;top:0" width="1600" height="1000" viewBox="0 0 1600 1000"><g opacity=".9">
<g filter="url(#fxda)" opacity=".55"><path d="M1431.6,934.8 h14.6 v6.2 h-8.4 v19.2 h8.4 v6.2 h-14.6 Z M1465.9,934.8 h-14.1 v6.2 h7.9 v19.2 h-7.9 v6.2 h14.1 Z" fill="#1a2240"/>
<text x="1474.9" y="966.3" font-family="'Liberation Sans',sans-serif" font-weight="bold" font-size="44.7" fill="#1a2240" textLength="103.5" lengthAdjust="spacingAndGlyphs">XDA</text></g>
<path d="M1429.6,931.8 h14.6 v6.2 h-8.4 v19.2 h8.4 v6.2 h-14.6 Z" fill="#ea8fab" opacity=".92"/>
<path d="M1463.9,931.8 h-14.1 v6.2 h7.9 v19.2 h-7.9 v6.2 h14.1 Z" fill="#72b6ec" opacity=".92"/>
<text x="1472.9" y="963.3" font-family="'Liberation Sans',sans-serif" font-weight="bold" font-size="44.7" fill="#eef3fd" fill-opacity=".86" textLength="103.5" lengthAdjust="spacingAndGlyphs">XDA</text>
</g></svg>
<div id="focus"></div><!--TASK_END-->
<!--TASKBAR-->
</div>
</body>
</html>
